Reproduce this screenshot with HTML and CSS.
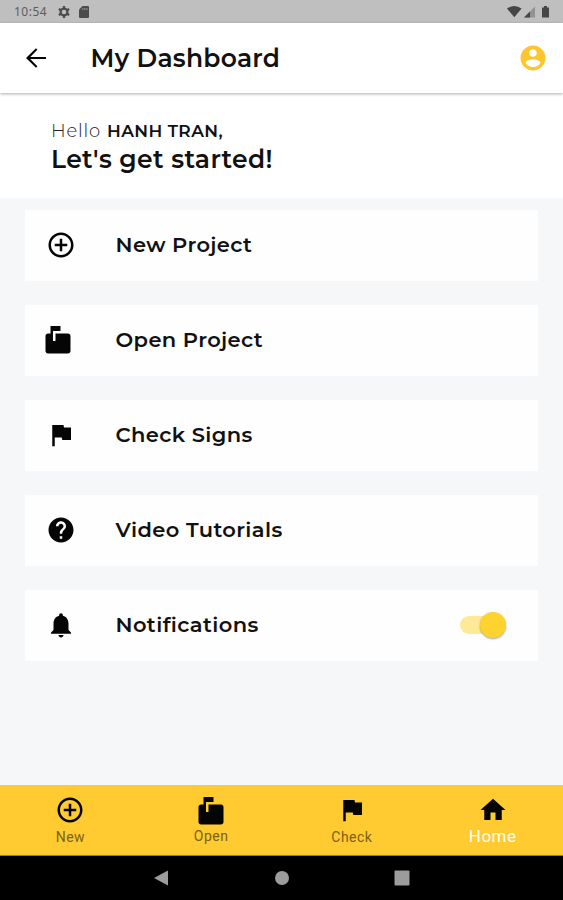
FILE: index.html
```
<!DOCTYPE html>
<html lang="en">
<head>
<meta charset="utf-8">
<title>My Dashboard</title>
<link rel="stylesheet" href="styles.css">
</head>
<body>
<svg class="defs" aria-hidden="true">
  <symbol id="plus" viewBox="0 0 24 24"><path d="M13 7h-2v4H7v2h4v4h2v-4h4v-2h-4V7zm-1-5C6.480 2 2 6.480 2 12s4.480 10 10 10 10-4.480 10-10S17.520 2 12 2zm0 18c-4.410 0-8-3.590-8-8s3.590-8 8-8 8 3.590 8 8-3.590 8-8 8z"/></symbol>
  <symbol id="mailbox" viewBox="0 0 24 24"><path d="M20 6H10v6H8V4h6V0H6v6H4c-1.100 0-2 .9-2 2v12c0 1.100.9 2 2 2h16c1.100 0 2-.9 2-2V8c0-1.100-.9-2-2-2z"/></symbol>
  <symbol id="flag" viewBox="0 0 24 24"><path d="M14.400 6L14 4H5v17h2v-7h5.600l.4 2h7V6z"/></symbol>
  <symbol id="help" viewBox="0 0 24 24"><path d="M12 2C6.480 2 2 6.480 2 12s4.480 10 10 10 10-4.480 10-10S17.520 2 12 2zm1 17h-2v-2h2v2zm2.070-7.750l-.9.920C13.450 12.900 13 13.500 13 15h-2v-.5c0-1.100.45-2.100 1.170-2.830l1.240-1.260c.37-.36.590-.860.590-1.410 0-1.100-.9-2-2-2s-2 .9-2 2H8c0-2.210 1.790-4 4-4s4 1.790 4 4c0 .880-.36 1.680-.93 2.250z"/></symbol>
  <symbol id="bell" viewBox="0 0 24 24"><path d="M12 22c1.100 0 2-.9 2-2h-4c0 1.100.89 2 2 2zm6-6v-5c0-3.070-1.640-5.640-4.500-6.320V4c0-.83-.67-1.500-1.500-1.500s-1.500.67-1.500 1.500v.680C7.630 5.360 6 7.920 6 11v5l-2 2v1h16v-1l-2-2z"/></symbol>
  <symbol id="home" viewBox="0 0 24 24"><path d="M10 20v-6h4v6h5v-8h3L12 3 2 12h3v8z"/></symbol>
  <symbol id="back" viewBox="0 0 24 24"><path d="M20 11.200H7.400l5.700-5.800L12 4.200l-8 7.800 8 7.800 1.100-1.200L7.400 12.800H20v-1.600z"/></symbol>
  <symbol id="account" viewBox="0 0 24 24"><path d="M12 2C6.480 2 2 6.480 2 12s4.480 10 10 10 10-4.480 10-10S17.520 2 12 2zm0 3c1.660 0 3 1.340 3 3s-1.340 3-3 3-3-1.340-3-3 1.340-3 3-3zm0 14.200c-2.500 0-4.710-1.280-6-3.220.03-1.990 4-3.080 6-3.080 1.990 0 5.970 1.090 6 3.080-1.290 1.940-3.500 3.220-6 3.220z"/></symbol>
</svg>
<div class="screen">
  <div class="status">
    <span class="clock">10:54</span>
    <svg class="gear" viewBox="0 0 14 14"><circle cx="7" cy="7" r="3.400"/><g><path d="M7 1v2M7 11v2M1.800 4l1.800 1M10.400 9l1.800 1M1.800 10l1.800-1M10.400 5l1.800-1"/></g></svg>
    <svg class="card-icon" viewBox="0 0 10 12"><path d="M3.500 0H9a1 1 0 0 1 1 1v10a1 1 0 0 1-1 1H1a1 1 0 0 1-1-1V3.500z"/><path class="slots" d="M3.900 2v2M5.900 2v2M7.900 2v2"/></svg>
    <svg class="radios" viewBox="0 0 44 14"><path d="M0 3.600Q7.300-1.800 14.600 3.600L7.300 12.300z"/><path class="faint" d="M28 1.500v11H17z"/><path d="M23 6.500v6h-6z"/><path d="M35 2.500h2V1h3v1.500h2v10h-7z"/></svg>
  </div>
  <header class="appbar">
    <svg class="icon back"><use href="#back"/></svg>
    <h1>My Dashboard</h1>
    <svg class="icon account"><use href="#account"/></svg>
  </header>
  <section class="greeting">
    <p><span class="hello">Hello</span> <span class="name">HANH TRAN,</span></p>
    <h2>Let's get started!</h2>
  </section>
  <main class="list">
    <div class="row"><svg class="icon"><use href="#plus"/></svg><span>New Project</span></div>
    <div class="row"><svg class="icon mail"><use href="#mailbox"/></svg><span>Open Project</span></div>
    <div class="row"><svg class="icon"><use href="#flag"/></svg><span>Check Signs</span></div>
    <div class="row"><svg class="icon"><use href="#help"/></svg><span>Video Tutorials</span></div>
    <div class="row"><svg class="icon"><use href="#bell"/></svg><span>Notifications</span><i class="switch"></i></div>
  </main>
  <nav class="tabs">
    <div class="tab"><svg class="icon"><use href="#plus"/></svg><span>New</span></div>
    <div class="tab open"><svg class="icon"><use href="#mailbox"/></svg><span>Open</span></div>
    <div class="tab"><svg class="icon"><use href="#flag"/></svg><span>Check</span></div>
    <div class="tab active"><svg class="icon"><use href="#home"/></svg><span>Home</span></div>
  </nav>
  <footer class="system">
    <svg viewBox="0 0 16 16"><path d="M15 .5v15L1 8z"/></svg>
    <svg viewBox="0 0 16 16"><circle cx="8" cy="8" r="7"/></svg>
    <svg viewBox="0 0 16 16"><rect x=".5" y=".5" width="15" height="15" rx="1"/></svg>
  </footer>
</div>
</body>
</html>
```
FILE: styles.css
```
* { box-sizing: border-box; }
body { margin: 0; font-family: Montserrat, Inter, sans-serif; color: #111; }
h1, h2, p { margin: 0; }
.defs { position: absolute; width: 0; height: 0; }
.screen { width: 563px; height: 900px; display: flex; flex-direction: column; background: #f6f7f9; overflow: hidden; }
.icon { width: 30px; height: 30px; flex: none; fill: #050505; }

.status { height: 23px; flex: none; background: #bfbfbf; display: flex; align-items: center; padding: 1px 12px 0 14px; }
.clock { font: 12px/16px "Noto Sans", sans-serif; letter-spacing: 0.5px; color: #5c5c5c; width: 43px; }
.gear { width: 14px; height: 14px; fill: none; stroke: #4c4c4c; stroke-width: 2.2; }
.card-icon { width: 10px; height: 12px; margin-left: 8px; fill: #4c4c4c; }
.slots { stroke: #aaa; stroke-width: 0.8; }
.radios { width: 44px; height: 14px; margin-left: auto; fill: #454545; }
.faint { fill: #929292; }

.appbar { height: 70px; flex: none; background: #fff; display: flex; align-items: center; padding: 0 15px 0 20.5px; box-shadow: 0 1px 3px rgba(0, 0, 0, 0.32); z-index: 1; }
.appbar h1 { font-size: 25px; line-height: 30px; font-weight: 600; letter-spacing: 0.25px; margin-left: 40px; white-space: nowrap; }
.appbar .account { fill: #fdc62e; margin-left: auto; }

.greeting { height: 105px; flex: none; background: #fff; padding: 27px 51px 0; white-space: nowrap; }
.greeting p { font-size: 17px; line-height: 22px; display: flex; align-items: baseline; gap: 6px; }
.hello { font-size: 18px; font-weight: 300; color: #222; letter-spacing: 0.8px; }
.name { font-weight: 600; letter-spacing: 0.4px; }
.greeting h2 { font-size: 25px; line-height: 34px; font-weight: 600; letter-spacing: 0.35px; }

.list { flex: 1; padding: 12px 25px 0; display: flex; flex-direction: column; gap: 24px; }
.row { height: 71px; flex: none; background: #fefefe; display: flex; align-items: center; padding: 0 32px 1px 20.5px; font-size: 21px; font-weight: 600; letter-spacing: 0.4px; }
.row .mail { margin: 1px 2.5px 0 -2.5px; }
.row span { margin-left: 40px; line-height: 26px; white-space: nowrap; }
.switch { width: 46px; height: 26px; margin-left: auto; display: flex; align-items: center; justify-content: flex-end; }
.switch::before { content: ""; width: 36px; height: 18px; margin-right: -16px; border-radius: 9px; background: #fee997; }
.switch::after { content: ""; flex: none; width: 26px; height: 26px; border-radius: 50%; background: #fdd32f; box-shadow: 0 1px 2px rgba(0, 0, 0, 0.35); }

.tabs { height: 71px; flex: none; background: #ffcb31; display: grid; grid-template-columns: repeat(4, 1fr); border-bottom: 1px solid #9c7b1c; }
.tab { display: flex; flex-direction: column; align-items: center; padding-top: 10px; font: 14px/18px Roboto, sans-serif; letter-spacing: 0.5px; color: #7a6115; }
.tab span { margin-top: 3px; }
.tab.open { padding-top: 12px; }
.tab.open span { margin-top: 0; }
.tab.active { color: #fffdf2; font-size: 17px; font-weight: 400; }
.tab.active span { margin-top: 2px; }

.system { height: 44px; flex: none; background: #000; display: flex; justify-content: center; gap: 104.5px; padding-top: 14px; }
.system svg { width: 16px; height: 16px; fill: #9c9c9c; }
```
